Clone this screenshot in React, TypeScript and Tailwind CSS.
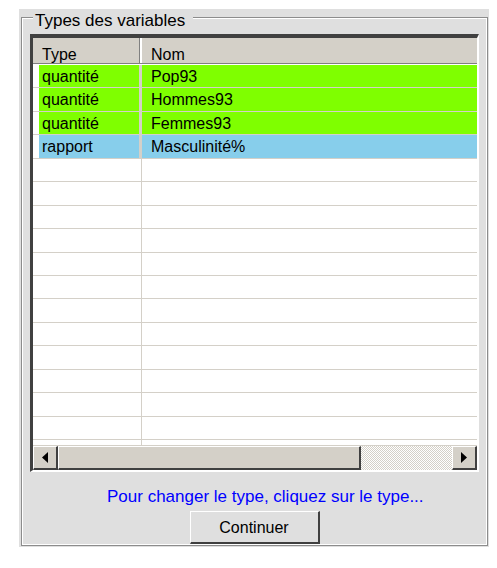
import React from 'react';

interface Variable {
  type: string;
  nom: string;
  color: string;
}

const variables: Variable[] = [
  { type: 'quantité', nom: 'Pop93', color: 'bg-[#7fff00]' },
  { type: 'quantité', nom: 'Hommes93', color: 'bg-[#7fff00]' },
  { type: 'quantité', nom: 'Femmes93', color: 'bg-[#7fff00]' },
  { type: 'rapport', nom: 'Masculinité%', color: 'bg-[#87ceeb]' },
];

const EMPTY_ROWS = 13;

const ScrollButton: React.FC<{ dir: 'left' | 'right' }> = ({ dir }) => (
  <div className="w-[25px] h-full shrink-0 flex items-center justify-center bg-[#d4d0c8] border-t border-l border-t-white border-l-white border-b-2 border-r-2 border-b-[#404040] border-r-[#404040]">
    <svg width="6" height="11" viewBox="0 0 6 11">
      {dir === 'left' ? (
        <polygon points="6,0 0,5.5 6,11" fill="#000" />
      ) : (
        <polygon points="0,0 6,5.5 0,11" fill="#000" />
      )}
    </svg>
  </div>
);

const App: React.FC = () => {
  return (
    <div className="w-[497px] h-[568px] bg-white pt-[9px] pl-[19px] font-['Liberation_Sans',Arial,sans-serif] text-black">
      <div className="w-[470px] h-[538px] bg-[#dfdfdf] pt-[8px] pl-[2px]">
        {/* Group box */}
        <div className="relative w-[467px] h-[529px] border border-[#8c8c8c] shadow-[inset_1px_1px_0_#fff,inset_-1px_-1px_0_#fff]">
          <span className="absolute left-[11px] top-[-6px] pl-[2px] pr-[8px] bg-[#dfdfdf] text-[17px] leading-[17px]">
            Types des variables
          </span>

          {/* Table */}
          <div className="ml-[8px] mt-[16px] w-[449px] h-[438px] border-t-4 border-l-[3px] border-r-2 border-b-2 border-t-[#404040] border-l-[#404040] border-r-white border-b-white">
            <div className="h-full flex flex-col bg-white text-[16px]">
              {/* Header */}
              <div className="h-[26px] shrink-0 flex bg-[#d4d0c8] border-b border-[#808080]">
                <div className="w-[107px] pl-[9px] pt-[5px] border-r border-[#808080]">Type</div>
                <div className="flex-1 pl-[9px] pt-[5px] border-l-2 border-white">Nom</div>
              </div>

              {/* Rows */}
              <div className="flex-1 mt-px overflow-hidden">
                {variables.map((v) => (
                  <div key={v.nom} className="h-[23.45px] flex border-b border-[#d4d0c8]">
                    <div className="w-[6px] shrink-0" />
                    <div className={`w-[100px] shrink-0 pl-[3px] pt-px flex items-center ${v.color}`}>{v.type}</div>
                    <div className="w-[3px] shrink-0 bg-[#d4d0c8]" />
                    <div className={`flex-1 pl-[9px] pt-px flex items-center ${v.color}`}>{v.nom}</div>
                  </div>
                ))}
                {Array.from({ length: EMPTY_ROWS }).map((_, i) => (
                  <div key={i} className="h-[23.45px] flex border-b border-[#d4d0c8]">
                    <div className="w-[109px] shrink-0 border-r border-[#d4d0c8]" />
                    <div className="flex-1" />
                  </div>
                ))}
              </div>

              {/* Horizontal scrollbar */}
              <div className="h-[25px] shrink-0 flex border-t border-[#d4d0c8]">
                <ScrollButton dir="left" />
                <div className="w-[303px] shrink-0 bg-[#d4d0c8] border-t border-l border-t-white border-l-white border-b-2 border-r-2 border-b-[#404040] border-r-[#404040]" />
                <div className="flex-1 bg-[repeating-conic-gradient(#d4d0c8_0_25%,#fff_0_50%)] bg-[length:2px_2px]" />
                <ScrollButton dir="right" />
              </div>
            </div>
          </div>

          <p className="mt-[15px] pl-[85px] text-[17px] leading-[20px] text-[#0000ff]">
            Pour changer le type, cliquez sur le type...
          </p>

          <button className="block mt-[4px] mx-auto w-[130px] h-[33px] pt-[2px] bg-[#dfdfdf] text-[16px] border-t border-l border-t-white border-l-white border-b-2 border-r-2 border-b-[#404040] border-r-[#404040]">
            Continuer
          </button>
        </div>
      </div>
    </div>
  );
};

export default App;
